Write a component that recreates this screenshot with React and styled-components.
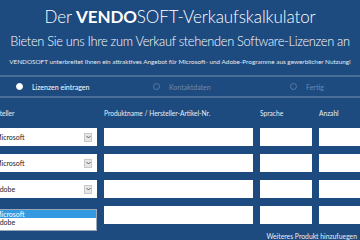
import React from 'react'
import styled, { createGlobalStyle } from 'styled-components'

const GlobalStyle = createGlobalStyle`
  html, body {
    margin: 0;
    padding: 0;
    background: #1d4a7f;
    overflow: hidden;
  }
  body {
    width: 360px;
    height: 240px;
    font-family: Lato, "Open Sans", sans-serif;
  }
`

const Page = styled.div`
  width: 360px;
  height: 240px;
  overflow: hidden;
  background: #1d4a7f;
  color: #fff;
  padding-top: 6px;
  box-sizing: border-box;
`

const Title = styled.h1`
  margin: 0;
  text-align: center;
  font-size: 17px;
  font-weight: 300;
  line-height: 22px;
  letter-spacing: -0.1px;
  white-space: nowrap;
  b {
    font-weight: 700;
  }
`

const Subtitle = styled.h2`
  margin: 2px 0 0;
  text-align: center;
  font-size: 12.8px;
  font-weight: 300;
  line-height: 22px;
  letter-spacing: -0.3px;
  white-space: nowrap;
`

const Intro = styled.p`
  margin: 4px 0 0;
  text-align: center;
  font-size: 6.4px;
  line-height: 12px;
  white-space: nowrap;
  color: #e4ebf3;
`

const StepBar = styled.div`
  margin-top: 7px;
  display: grid;
  grid-template-columns: repeat(3, 137px);
  padding-left: 16px;
  height: 19px;
  border-top: 2px solid #4b6e99;
  border-bottom: 2px solid #4b6e99;
`

const Step = styled.div`
  display: flex;
  align-items: center;
  gap: 9px;
  font-size: 7px;
  color: ${(p) => (p.active ? '#ffffff' : '#6c8ab0')};
`

const Dot = styled.span`
  width: 7px;
  height: 7px;
  border-radius: 50%;
  box-sizing: border-box;
  background: ${(p) => (p.active ? '#ffffff' : 'transparent')};
  border: 1px solid ${(p) => (p.active ? '#ffffff' : '#5a7aa3')};
`

const Table = styled.div`
  margin: 11px 0 0 -14px;
  display: grid;
  grid-template-columns: 111px 149px 52px 60px;
  column-gap: 7px;
  row-gap: 8px;
`

const Head = styled.div`
  font-size: 6.6px;
  line-height: 8px;
  margin-bottom: 3px;
  white-space: nowrap;
  color: #e8eef5;
`

const Select = styled.div`
  height: 18px;
  background: #fff;
  display: flex;
  align-items: center;
  justify-content: space-between;
  padding: 0 4px 0 9px;
  box-sizing: border-box;
  font-size: 7px;
  color: #222;
`

const Arrow = styled.span`
  width: 8px;
  height: 9px;
  background: #e6e6e6;
  border: 1px solid #c8c8c8;
  box-sizing: border-box;
  display: grid;
  place-items: center;
  margin-right: 1px;
  svg {
    display: block;
  }
`

const Input = styled.div`
  height: 18px;
  background: #fff;
`

const Listbox = styled.div`
  margin-top: 3px;
  height: 22px;
  background: #fff;
  border: 1px solid #9aa8b8;
  box-sizing: border-box;
  font-size: 7px;
  color: #222;
`

const Option = styled.div`
  height: 8px;
  line-height: 8px;
  padding-left: 8px;
  background: ${(p) => (p.selected ? '#3399e0' : 'transparent')};
  color: ${(p) => (p.selected ? '#fff' : '#222')};
`

const Footer = styled.div`
  margin-top: 1px;
  text-align: right;
  padding-right: 3px;
  font-size: 6.8px;
  line-height: 9px;
  color: #e8eef5;
`

const rows = ['Microsoft', 'Microsoft', 'Adobe']

const Chevron = () => (
  <svg width="5" height="4" viewBox="0 0 5 4">
    <path d="M0.5 1 L2.5 3 L4.5 1" fill="none" stroke="#555" strokeWidth="0.9" />
  </svg>
)

export default function App() {
  return (
    <>
      <GlobalStyle />
      <Page>
        <Title>
          Der <b>VENDO</b>SOFT-Verkaufskalkulator
        </Title>
        <Subtitle>Bieten Sie uns Ihre zum Verkauf stehenden Software-Lizenzen an</Subtitle>
        <Intro>
          VENDOSOFT unterbreitet Ihnen ein attraktives Angebot für Microsoft- und Adobe-Programme aus gewerblicher Nutzung!
        </Intro>
        <StepBar>
          <Step active>
            <Dot active />
            Lizenzen eintragen
          </Step>
          <Step>
            <Dot />
            Kontaktdaten
          </Step>
          <Step>
            <Dot />
            Fertig
          </Step>
        </StepBar>
        <Table>
          <Head>Hersteller</Head>
          <Head>Produktname / Hersteller-Artikel-Nr.</Head>
          <Head>Sprache</Head>
          <Head>Anzahl</Head>
          {rows.map((r, i) => (
            <React.Fragment key={i}>
              <Select>
                {r}
                <Arrow>
                  <Chevron />
                </Arrow>
              </Select>
              <Input />
              <Input />
              <Input />
            </React.Fragment>
          ))}
          <Listbox>
            <Option selected>Microsoft</Option>
            <Option>Adobe</Option>
          </Listbox>
          <Input />
          <Input />
          <Input />
        </Table>
        <Footer>Weiteres Produkt hinzufuegen</Footer>
      </Page>
    </>
  )
}
